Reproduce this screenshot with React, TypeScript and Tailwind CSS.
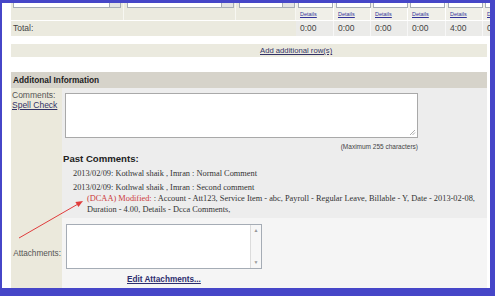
import React from 'react';

const sans = "font-['Liberation_Sans',Arial,sans-serif]";
const serif = "font-['Liberation_Serif','Times_New_Roman',serif]";

const dayCols = [38, 37, 37, 38, 37, 37];
const totals = ['0:00', '0:00', '0:00', '0:00', '4:00', '0:00'];

const SelectStub: React.FC<{ ml: number; input: number; btn: number }> = ({ ml, input, btn }) => (
  <div className="flex h-[5px]" style={{ marginLeft: ml }}>
    <div className="h-full border-x border-b border-[#a6adb6] bg-white" style={{ width: input }} />
    <div className="h-full border-r border-b border-[#a6adb6] bg-[#e4e4e4]" style={{ width: btn }} />
  </div>
);

const App: React.FC = () => {
  return (
    <div className={`relative w-[495px] h-[296px] overflow-hidden bg-[#4646c8] pt-[3px] pl-[2px] pr-[5px] pb-[8px] ${sans}`}>
      <div className="h-full bg-white pl-[9px] pr-[3px] overflow-hidden flex flex-col">
        {/* entry row (scrolled, inputs cut off) */}
        <div className="flex h-[17px] shrink-0 overflow-hidden -mr-[3px]">
          <div className="w-[113px] shrink-0 bg-[#ebeadf] border-r border-[#f7f7f2]">
            <SelectStub ml={2} input={97} btn={11} />
          </div>
          <div className="w-[112px] shrink-0 bg-[#ebeadf] border-r border-[#f7f7f2]">
            <SelectStub ml={3} input={95} btn={12} />
          </div>
          <div className="w-[60px] shrink-0 bg-[#ebeadf] border-r border-[#f7f7f2]">
            <SelectStub ml={3} input={44} btn={12} />
          </div>
          {dayCols.map((w, i) => (
            <div key={i} className="shrink-0 bg-[#f0efe8] border-r border-white" style={{ width: w }}>
              <div className="ml-[2px] w-[35px] h-[5px] border-x border-b border-[#a6adb6] bg-white" />
              <a className="block pl-[4px] mt-[3px] text-[5.5px] leading-[7px] text-[#333399] underline">Details</a>
            </div>
          ))}
        </div>
        <div className="h-px shrink-0" />
        {/* totals */}
        <div className="flex h-[15px] shrink-0 overflow-hidden -mr-[3px] text-[8.5px] leading-[15px] text-[#444]">
          <div className="w-[285px] shrink-0 bg-[#ebeadf] pl-[2px]">Total:</div>
          {dayCols.map((w, i) => (
            <div key={i} className="shrink-0 bg-[#ebebe9] border-r border-[#f7f7f7] pl-[4px]" style={{ width: w }}>
              {totals[i]}
            </div>
          ))}
        </div>
        <div className="h-[8px] shrink-0" />
        <div className="h-[13px] shrink-0 bg-[#ebeadf] pl-[249px] text-[7.7px] leading-[13px]">
          <a className="text-[#333366] underline">Add additional row(s)</a>
        </div>
        <div className="h-[15px] shrink-0" />
        {/* additional information */}
        <div className="h-[16px] shrink-0 bg-[#d6d3ca] pl-[2px] text-[8.3px] leading-[16px] font-bold text-[#222]">
          Additonal Information
        </div>
        <div className="flex h-[130px] shrink-0">
          <div className="w-[51px] shrink-0 bg-[#ebe9dc] pl-[1px] pt-[2px] text-[8.5px] leading-[10px] overflow-hidden whitespace-nowrap">
            <div className="text-[#555]">Comments:</div>
            <a className="text-[#333366] underline">Spell Check</a>
          </div>
          <div className="flex-1 bg-[#ededed] pl-[3px] pt-[5px]">
            <div className="relative w-[353px] h-[45px] border border-[#a9a9a9] bg-white">
              <svg className="absolute right-[1px] bottom-[1px]" width="7" height="7" viewBox="0 0 7 7">
                <path d="M6 1 L1 6 M6 3.5 L3.5 6" stroke="#9a9a9a" strokeWidth="0.8" />
              </svg>
            </div>
            <div className="w-[353px] mt-[4px] text-right text-[6.5px] leading-[9px] text-[#444]">
              (Maximum 255 characters)
            </div>
            <div className="-ml-[2px] mt-[1.5px] text-[9.6px] leading-[11px] font-bold text-[#222]">Past Comments:</div>
            <div className={`ml-[8px] ${serif} text-[8.35px] leading-[11px] text-[#333] whitespace-nowrap`}>
              <div className="mt-[4px]">2013/02/09: Kothwal shaik , Imran : Normal Comment</div>
              <div className="mt-[3px]">2013/02/09: Kothwal shaik , Imran : Second comment</div>
              <div className="pl-[14px]">
                <span className="text-[#cc3a3a]">(DCAA) Modified:</span> : Account - Att123, Service Item - abc, Payroll - Regular Leave, Billable - Y, Date - 2013-02-08,
              </div>
              <div className="pl-[14px]">Duration - 4.00, Details - Dcca Comments,</div>
            </div>
          </div>
        </div>
        <div className="flex flex-1">
          <div className="w-[51px] shrink-0 bg-[#ebe9dc] pt-[31px] pr-[1px] text-right text-[8.2px] leading-[10px] text-[#555] whitespace-nowrap">
            Attachments:
          </div>
          <div className="flex-1 bg-[#f5f5f5] pl-[4px] pt-[6px]">
            <div className="flex w-[196px] h-[45px] border border-[#a5acb5] bg-white">
              <div className="flex-1" />
              <div className="w-[11px] border-l border-[#dcdcdc] bg-[#f7f7f7] flex flex-col justify-between items-center py-[3px] text-[5px] leading-[5px] text-[#999]">
                <span>▲</span>
                <span>▼</span>
              </div>
            </div>
            <a className="block ml-[61px] mt-[6px] text-[8.2px] leading-[10px] font-bold text-[#2d2d6e] underline">
              Edit Attachments...
            </a>
          </div>
        </div>
      </div>
      <svg className="absolute left-0 top-0 pointer-events-none" width="495" height="296">
        <line x1="19" y1="238" x2="77.5" y2="204.3" stroke="#e03c3c" strokeWidth="1" />
        <polygon points="83,201 78.4,207.1 75.4,201.9" fill="#e03c3c" />
      </svg>
    </div>
  );
};

export default App;
